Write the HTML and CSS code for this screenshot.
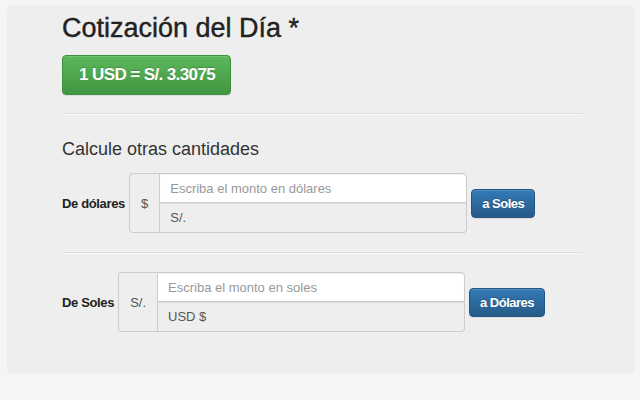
FILE: index.html
```html
<!DOCTYPE html>
<html lang="es">

<head>
    <meta charset="UTF-8">
    <meta name="viewport" content="width=device-width, initial-scale=1.0">
    <title>Cotización del Día</title>

    <link rel="stylesheet" href="styles.css">
</head>

<body>
    <section class="jumbo">
        <h1 class="title">Cotización del Día *</h1>
        <div class="rate_btn">1 USD = S/. 3.3075</div>

        <hr class="sep">

        <h3 class="subtitle">Calcule otras cantidades</h3>

        <form action="#" class="calc_row" name="fromDollars">
            <label for="usd" class="row_label">De dólares</label>
            <div class="input_group">
                <span class="add_on">$</span>
                <div class="input_stack">
                    <input type="text" id="usd" class="amount" placeholder="Escriba el monto en dólares">
                    <input type="text" class="result" value="S/." readonly>
                </div>
            </div>
            <button type="button" class="convert_btn">a Soles</button>
        </form>

        <hr class="sep sep_second">

        <form action="#" class="calc_row" name="fromSoles">
            <label for="pen" class="row_label">De Soles</label>
            <div class="input_group">
                <span class="add_on">S/.</span>
                <div class="input_stack">
                    <input type="text" id="pen" class="amount" placeholder="Escriba el monto en soles">
                    <input type="text" class="result" value="USD $" readonly>
                </div>
            </div>
            <button type="button" class="convert_btn">a Dólares</button>
        </form>
    </section>
</body>

</html>
```

FILE: styles.css
```css
body {
    margin: 0;
    background: #f5f5f5;
    font-family: "Liberation Sans", Arial, sans-serif;
    color: #333;
}

.jumbo {
    margin: 5px 5px 0 7px;
    width: 628px;
    height: 369px;
    box-sizing: border-box;
    padding: 8px 53px 0 55px;
    background: #eee;
    border-radius: 6px;
}

.title {
    margin: 0;
    font-size: 27px;
    line-height: 30px;
    font-weight: normal;
    color: #222;
    -webkit-text-stroke: 0.4px #222;
}

.rate_btn {
    display: inline-block;
    margin-top: 12px;
    height: 40px;
    box-sizing: border-box;
    padding: 0 15px 0 16px;
    line-height: 38px;
    font-size: 17px;
    font-weight: bold;
    letter-spacing: -0.6px;
    color: #fff;
    text-shadow: 0 -1px 0 rgba(0, 0, 0, 0.2);
    background: linear-gradient(#5cb85c, #419641);
    border: 1px solid #3e8f3e;
    border-radius: 4px;
    box-shadow: inset 0 1px 0 rgba(255, 255, 255, 0.15), 0 1px 1px rgba(0, 0, 0, 0.075);
}

.sep {
    margin: 18px 0 0;
    border: none;
    border-top: 1px solid #dcdcdc;
    border-bottom: 1px solid #f8f8f8;
}

.subtitle {
    margin: 23px 0 0;
    font-size: 18px;
    line-height: 22px;
    font-weight: normal;
    color: #333;
}

.calc_row {
    display: flex;
    align-items: center;
    gap: 4px;
    margin-top: 13px;
}

.sep_second {
    margin-top: 19px;
}

.sep_second + .calc_row {
    margin-top: 18px;
}

.row_label {
    font-size: 13px;
    font-weight: bold;
    letter-spacing: -0.35px;
    color: #222;
}

.input_group {
    display: flex;
}

.add_on {
    display: flex;
    align-items: center;
    padding: 0 11px;
    height: 60px;
    box-sizing: border-box;
    font-size: 13px;
    color: #555;
    background: #eee;
    border: 1px solid #ccc;
    border-right: none;
    border-radius: 4px 0 0 4px;
}

.input_stack {
    display: flex;
    flex-direction: column;
    width: 308px;
}

.input_stack input {
    height: 30px;
    box-sizing: border-box;
    margin: 0;
    padding: 0 10px;
    font-family: "Liberation Sans", Arial, sans-serif;
    font-size: 13px;
    color: #555;
    border: 1px solid #ccc;
    outline: none;
    box-shadow: inset 0 1px 1px rgba(0, 0, 0, 0.075);
}

.input_stack input::placeholder {
    color: #999;
}

.amount {
    background: #fff;
    border-radius: 0 4px 0 0;
}

.result {
    background: #eee;
    border-top: none !important;
    border-radius: 0 0 4px 0;
}

.convert_btn {
    height: 29px;
    padding: 0 10px;
    font-family: "Liberation Sans", Arial, sans-serif;
    font-size: 13px;
    font-weight: bold;
    letter-spacing: -0.5px;
    color: #fff;
    text-shadow: 0 -1px 0 rgba(0, 0, 0, 0.2);
    background: linear-gradient(#337ab7, #265a88);
    border: 1px solid #245580;
    border-radius: 4px;
    box-shadow: inset 0 1px 0 rgba(255, 255, 255, 0.15), 0 1px 1px rgba(0, 0, 0, 0.075);
    cursor: pointer;
}
```
